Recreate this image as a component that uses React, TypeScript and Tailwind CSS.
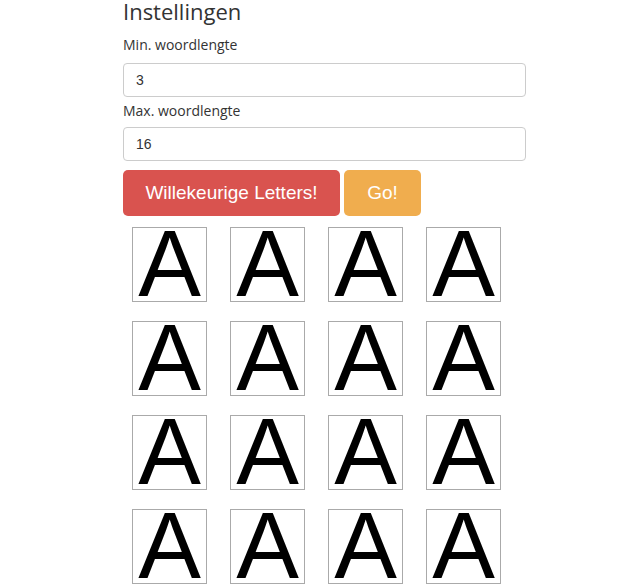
export default function App() {
  const tiles = Array.from({ length: 16 }, () => "A")

  return (
    <div className="min-h-screen bg-white text-[#333] font-['Open_Sans',sans-serif]">
      <div className="ml-[123px] w-[403px]">
        <h2 className="text-[22px] leading-[23px] mb-[13px]">Instellingen</h2>

        <label className="block text-[14px] leading-[18px] mb-[9px]">Min. woordlengte</label>
        <input
          defaultValue="3"
          className="block w-full h-[34px] px-3 border border-[#ccc] rounded-[4px] text-[14px] font-['Liberation_Sans',sans-serif] text-[#333]"
        />

        <label className="block text-[14px] leading-[18px] mt-[5px] mb-[7px]">Max. woordlengte</label>
        <input
          defaultValue="16"
          className="block w-full h-[34px] px-3 border border-[#ccc] rounded-[4px] text-[14px] font-['Liberation_Sans',sans-serif] text-[#333]"
        />

        <div className="flex gap-[4px] mt-[9px] font-['Liberation_Sans',sans-serif]">
          <button className="h-[46px] w-[217px] rounded-[5px] bg-[#d9534f] text-white text-[19px]">
            Willekeurige Letters!
          </button>
          <button className="h-[46px] w-[77px] rounded-[5px] bg-[#f0ad4e] text-white text-[19px]">
            Go!
          </button>
        </div>

        <div className="grid grid-cols-[repeat(4,75px)] gap-x-[23px] gap-y-[19px] ml-[9px] mt-[11px] font-['Liberation_Sans',sans-serif]">
          {tiles.map((t, i) => (
            <div
              key={i}
              className="h-[75px] w-[75px] border border-[#aaa] text-black text-[94px] leading-[71px] text-center overflow-hidden"
            >
              {t}
            </div>
          ))}
        </div>
      </div>
    </div>
  )
}
